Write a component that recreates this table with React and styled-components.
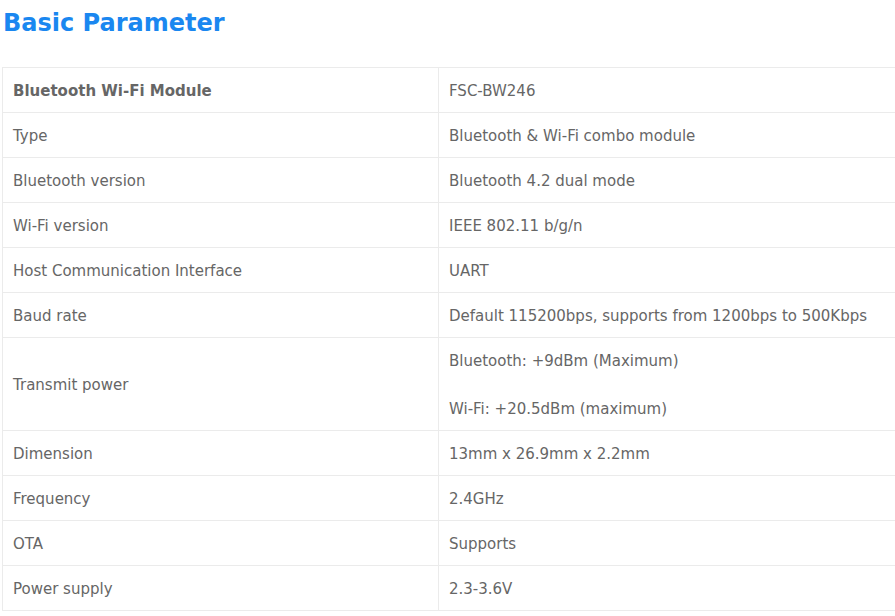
import React from 'react'
import styled, { createGlobalStyle } from 'styled-components'

const GlobalStyle = createGlobalStyle`
  body {
    margin: 0;
    background: #ffffff;
    font-family: "DejaVu Sans", Verdana, sans-serif;
  }
`

const Page = styled.div`
  padding: 0 0 0 2px;
  overflow: hidden;
`

const Title = styled.h2`
  margin: 0;
  padding: 8px 0 0 1px;
  height: 67px;
  box-sizing: border-box;
  font-family: "DejaVu Sans", Verdana, sans-serif;
  font-size: 24px;
  line-height: 30px;
  font-weight: 700;
  color: #1a87f0;
`

const Table = styled.table`
  width: calc(100% + 20px);
  border-collapse: collapse;
  font-size: 15px;
  color: #666666;
`

const Cell = styled.td`
  border: 1px solid #ebebeb;
  padding: 11px 10px 9px;
  line-height: 24px;
  vertical-align: middle;
  white-space: nowrap;
  width: ${({ $w }) => $w || 'auto'};
  font-weight: ${({ $bold }) => ($bold ? 700 : 400)};
`

const Para = styled.p`
  margin: 0;
  & + & {
    margin-top: 24px;
  }
`

const rows = [
  ['Bluetooth Wi-Fi Module', ['FSC-BW246'], true],
  ['Type', ['Bluetooth & Wi-Fi combo module']],
  ['Bluetooth version', ['Bluetooth 4.2 dual mode']],
  ['Wi-Fi version', ['IEEE 802.11 b/g/n']],
  ['Host Communication Interface', ['UART']],
  ['Baud rate', ['Default 115200bps, supports from 1200bps to 500Kbps']],
  ['Transmit power', ['Bluetooth: +9dBm (Maximum)', 'Wi-Fi: +20.5dBm (maximum)']],
  ['Dimension', ['13mm x 26.9mm x 2.2mm']],
  ['Frequency', ['2.4GHz']],
  ['OTA', ['Supports']],
  ['Power supply', ['2.3-3.6V']],
]

export default function App() {
  return <>
    <GlobalStyle />
    <Page>
      <Title>Basic Parameter</Title>
      <Table>
        <tbody>
          {rows.map(([name, values, bold]) => (
            <tr key={name}>
              <Cell $w="415px" $bold={bold}>{name}</Cell>
              <Cell>
                {values.map(v => <Para key={v}>{v}</Para>)}
              </Cell>
            </tr>
          ))}
        </tbody>
      </Table>
    </Page>
  </>
}
